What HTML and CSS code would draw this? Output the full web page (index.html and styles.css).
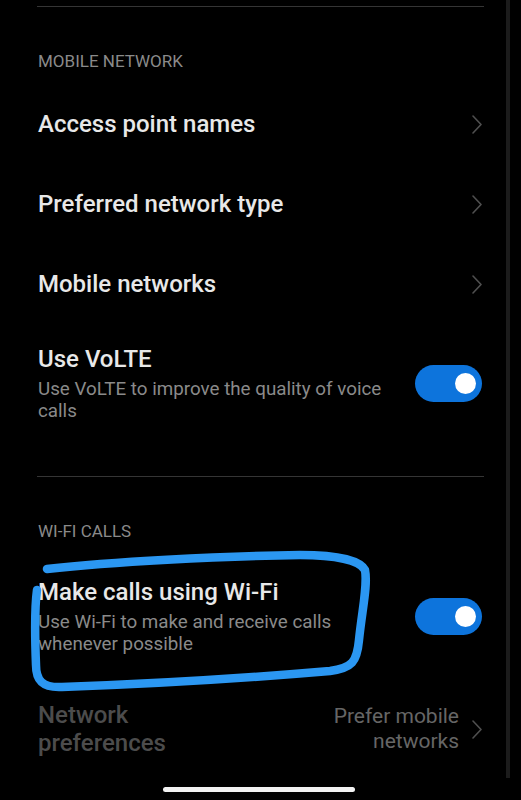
FILE: index.html
```html
<!DOCTYPE html>
<html lang="en">
<head>
    <meta charset="UTF-8">
    <meta name="viewport" content="width=device-width, initial-scale=1.0">
    <title>SIM card settings</title>
    <link rel="stylesheet" href="styles.css">
</head>
<body>
    <div class="screen">
        <div class="content">
            <hr class="divider divider-top">

            <section class="group">
                <h2 class="group-title">MOBILE NETWORK</h2>

                <div class="row row-link">
                    <span class="row-title">Access point names</span>
                    <svg class="chevron" viewBox="0 0 10 19"><path d="M1 1 L9 9.5 L1 18"/></svg>
                </div>
                <div class="row row-link">
                    <span class="row-title">Preferred network type</span>
                    <svg class="chevron" viewBox="0 0 10 19"><path d="M1 1 L9 9.5 L1 18"/></svg>
                </div>
                <div class="row row-link">
                    <span class="row-title">Mobile networks</span>
                    <svg class="chevron" viewBox="0 0 10 19"><path d="M1 1 L9 9.5 L1 18"/></svg>
                </div>

                <div class="row row-switch row-volte">
                    <div class="row-text">
                        <span class="row-title">Use VoLTE</span>
                        <span class="row-sub">Use VoLTE to improve the quality of voice calls</span>
                    </div>
                    <span class="switch on"><span class="knob"></span></span>
                </div>
            </section>

            <hr class="divider divider-mid">

            <section class="group">
                <h2 class="group-title">WI-FI CALLS</h2>

                <div class="row row-switch row-wifi">
                    <div class="row-text">
                        <span class="row-title">Make calls using Wi-Fi</span>
                        <span class="row-sub">Use Wi-Fi to make and receive calls whenever possible</span>
                    </div>
                    <span class="switch on"><span class="knob"></span></span>
                </div>

                <div class="row row-pref">
                    <span class="row-title dim">Network preferences</span>
                    <div class="row-value">
                        <span class="value-text">Prefer mobile networks</span>
                        <svg class="chevron" viewBox="0 0 10 19"><path d="M1 1 L9 9.5 L1 18"/></svg>
                    </div>
                </div>
            </section>
        </div>

        <!-- scroll edge and gesture bar -->
        <div class="edge"></div>
        <div class="home-bar"></div>

        <!-- hand-drawn marker over the wifi row -->
        <svg class="scribble" viewBox="0 0 521 800">
            <path d="M47 569 C110 562 220 556 300 555 C335 555 360 560 365 570 C368 585 362 610 359 640 C357 662 352 668 330 671 C260 677 150 684 62 687 C42 688 36 680 36 665 C35 640 34 612 37 590"/>
        </svg>
    </div>
</body>
</html>
```

FILE: styles.css
```css
/* base */
body {
    margin: 0;
    background: #000;
    font-family: Roboto, "Noto Sans", Arial, sans-serif;
    color: #e6e6e6;
}

.screen {
    position: relative;
    width: 521px;
    height: 800px;
    overflow: hidden;
    background: #000;
}

.content {
    padding: 6px 39px 0 38px;
}

.divider {
    margin: 0 -2px 0 -1px;
    border: none;
    height: 1px;
    background: #353535;
}

.divider-mid {
    margin-top: 54px;
}

/* section headers */
.group-title {
    margin: 0;
    padding-top: 44px;
    font-size: 17px;
    font-weight: 400;
    line-height: 20px;
    color: #8a8a8a;
}

/* rows */
.row {
    display: flex;
    align-items: center;
    justify-content: space-between;
}

.row-title {
    font-size: 24px;
    font-weight: 500;
    line-height: 28px;
    color: #e8e8e8;
}

.row-link {
    height: 80px;
}

.group-title + .row-link {
    margin-top: 13px;
}

.row-text {
    display: flex;
    flex-direction: column;
    max-width: 355px;
}

.row-sub {
    margin-top: 5px;
    font-size: 18.8px;
    line-height: 22px;
    color: #8a8a8a;
}

.row-volte {
    padding-top: 21px;
}

.row-wifi {
    padding-top: 37px;
}

.switch {
    flex: none;
    position: relative;
    width: 67px;
    height: 37px;
    border-radius: 19px;
    background: #0d74dc;
}

.switch .knob {
    position: absolute;
    top: 8px;
    right: 6px;
    width: 21px;
    height: 21px;
    border-radius: 50%;
    background: #fff;
}

.chevron {
    width: 10px;
    height: 19px;
    flex: none;
    fill: none;
    stroke: #4f4f4f;
    stroke-width: 1.6;
    stroke-linecap: round;
    stroke-linejoin: round;
}

.row-pref {
    padding-top: 46px;
}

.row-title.dim {
    width: 160px;
    color: #4c4c4c;
}

.row-value {
    display: flex;
    align-items: center;
    gap: 13px;
}

.value-text {
    width: 160px;
    text-align: right;
    font-size: 21px;
    line-height: 25px;
    color: #666;
}

/* overlays */
.edge {
    position: absolute;
    top: 0;
    left: 506px;
    width: 4px;
    height: 778px;
    background: #1c1c1c;
}

.home-bar {
    position: absolute;
    left: 163px;
    top: 787px;
    width: 192px;
    height: 5px;
    border-radius: 3px;
    background: #f2f2f2;
}

.scribble {
    position: absolute;
    left: 0;
    top: 0;
    width: 521px;
    height: 800px;
    fill: none;
    stroke: #2b97f2;
    stroke-width: 8.5;
    stroke-linecap: round;
    stroke-linejoin: round;
}
```
